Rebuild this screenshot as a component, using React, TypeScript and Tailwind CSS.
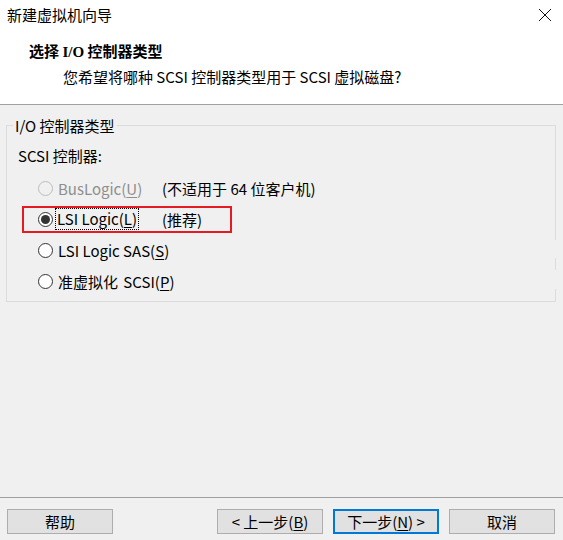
import React from "react";

const FONT = { fontFamily: '"Noto Sans CJK SC", "Noto Sans", sans-serif' };

function Key({ k }: { k: string }) {
  return <span className="underline underline-offset-2">{k}</span>;
}

function Radio({ checked, disabled }: { checked?: boolean; disabled?: boolean }) {
  return (
    <span
      className={`w-[15px] h-[15px] rounded-full border flex items-center justify-center shrink-0 ${
        disabled ? "border-[#bcbcbc] bg-[#f0f0f0]" : "border-[#333333] bg-white"
      }`}
    >
      {checked && <span className="w-[9px] h-[9px] rounded-full bg-[#333333]" />}
    </span>
  );
}

function Button({ children, primary }: { children: React.ReactNode; primary?: boolean }) {
  return (
    <button
      className={`w-[106px] h-[25px] bg-[#e1e1e1] text-[15px] leading-none text-black flex items-center justify-center ${
        primary ? "border-2 border-[#0078d7]" : "border border-[#adadad]"
      }`}
    >
      {children}
    </button>
  );
}

export default function App() {
  return (
    <div className="w-[563px] h-[540px] bg-[#f0f0f0] flex flex-col text-black text-[15px]" style={FONT}>
      {/* Header */}
      <div className="h-[105px] bg-white border-b border-[#a0a0a0] flex flex-col shrink-0">
        <div className="h-[30px] flex items-center justify-between pl-[7px] pr-[11px]">
          <span className="leading-[20px]">新建虚拟机向导</span>
          <svg width="14" height="14" viewBox="0 0 14 14" fill="none" stroke="#111" strokeWidth="1">
            <path d="M1 1 L13 13 M13 1 L1 13" />
          </svg>
        </div>
        <div className="mt-[11px] pl-[29px] leading-[20px] font-bold">
          选择 <span style={{ fontFamily: '"Liberation Serif", serif' }}>I/O</span> 控制器类型
        </div>
        <div className="mt-[5px] pl-[63px] leading-[20px]">您希望将哪种 SCSI 控制器类型用于 SCSI 虚拟磁盘?</div>
      </div>

      {/* Body */}
      <div className="flex-1 pt-[20px] pl-[6px] pr-[7px]">
        <div className="relative h-[177px] border border-[#dcdcdc] pl-[11px] pt-[20px]">
          <span className="absolute left-[6px] top-[-10px] px-[2px] leading-[20px] bg-[#f0f0f0]">I/O 控制器类型</span>
          <span className="absolute right-[-1px] top-[114px] w-[1px] h-[18px] bg-[#f0f0f0]" />
          <span className="absolute right-[-1px] top-[144px] w-[1px] h-[19px] bg-[#f0f0f0]" />

          <div className="leading-[20px]">SCSI 控制器:</div>

          <div className="mt-[7px] -ml-[11px] flex flex-col">
            <div className="h-[31px] flex items-center pl-[31px] text-[#8e8e8e]">
              <Radio disabled />
              <span className="ml-[5px] w-[104px] leading-[20px]">
                BusLogic(<Key k="U" />)
              </span>
              <span className="text-black leading-[20px]">(不适用于 64 位客户机)</span>
            </div>

            <div className="relative h-[31px] flex items-center pl-[31px]">
              <span className="absolute left-[15px] top-[2px] w-[210px] h-[27px] border-2 border-[#e51b24]" />
              <Radio checked />
              <span className="ml-[3px] w-[106px]">
                <span className="outline-1 outline-dotted outline-black px-[1px] leading-[20px] inline-block">
                  LSI Logic(<Key k="L" />)
                </span>
              </span>
              <span className="leading-[20px]">(推荐)</span>
            </div>

            <div className="h-[31px] flex items-center pl-[31px]">
              <Radio />
              <span className="ml-[5px] leading-[20px]">
                LSI Logic SAS(<Key k="S" />)
              </span>
            </div>

            <div className="h-[31px] flex items-center pl-[31px]">
              <Radio />
              <span className="ml-[5px] leading-[20px] [word-spacing:2px]">
                准虚拟化 SCSI(<Key k="P" />)
              </span>
            </div>
          </div>
        </div>
      </div>

      {/* Footer */}
      <div className="h-[43px] border-t border-[#a0a0a0] shrink-0 flex items-start justify-between pt-[11px] pl-[7px] pr-[8px]">
        <Button>帮助</Button>
        <div className="flex gap-[10px]">
          <Button>
            &lt; 上一步(<Key k="B" />)
          </Button>
          <Button primary>
            下一步(<Key k="N" />) &gt;
          </Button>
          <Button>取消</Button>
        </div>
      </div>
    </div>
  );
}
